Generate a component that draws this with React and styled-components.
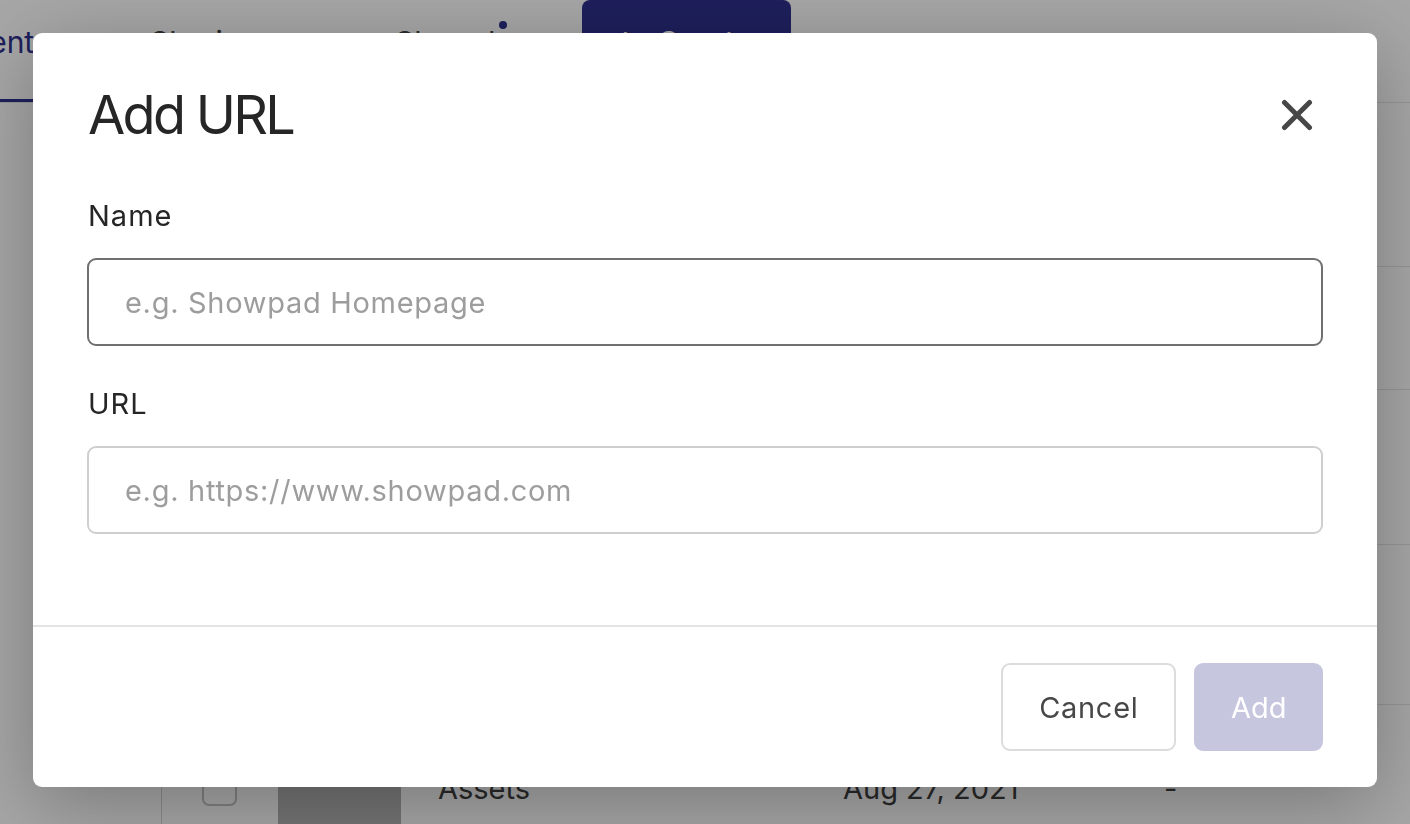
import React from "react";
import styled, { createGlobalStyle } from "styled-components";

const GlobalStyle = createGlobalStyle`
  html, body {
    margin: 0;
    padding: 0;
    overflow: hidden;
    background: #ffffff;
    font-family: Inter, "Noto Sans", "Liberation Sans", sans-serif;
  }
  * {
    box-sizing: border-box;
  }
`;

const NAVY = "#2e308d";

/* ---------- page behind the dialog ---------- */

const Page = styled.div`
  width: 1410px;
  height: 824px;
  overflow: hidden;
  background: #ffffff;
`;

const TopBar = styled.div`
  display: flex;
  align-items: stretch;
  height: 103px;
  border-bottom: 1px solid #e4e4e4;
  margin-left: -78px;
`;

const Tab = styled.div`
  position: relative;
  width: ${({ w }) => w}px;
  flex-shrink: 0;
  padding-top: 27px;
  font-size: 30px;
  line-height: 30px;
  color: ${({ active }) => (active ? NAVY : "#444444")};
  border-bottom: 3px solid ${({ active }) => (active ? NAVY : "transparent")};
`;

const Dot = styled.span`
  position: absolute;
  top: 21px;
  left: 104px;
  width: 8px;
  height: 8px;
  border-radius: 50%;
  background: ${NAVY};
`;

const CreateButton = styled.div`
  display: flex;
  align-items: flex-start;
  justify-content: center;
  width: 209px;
  height: 88px;
  padding-top: 27px;
  border-radius: 8px;
  background: ${NAVY};
  color: #ffffff;
  font-size: 30px;
  line-height: 30px;
`;

const Body = styled.div`
  display: flex;
`;

const Sidebar = styled.div`
  width: 161px;
  flex-shrink: 0;
`;

const Table = styled.div`
  flex: 1;
  border-left: 1px solid #d6d6d6;
`;

const Band = styled.div`
  display: flex;
  align-items: center;
  height: ${({ h }) => h}px;
  border-bottom: 1px solid #e4e4e4;
`;

const CheckCell = styled.div`
  width: 116px;
  padding-left: 40px;
  flex-shrink: 0;
`;

const Checkbox = styled.div`
  width: 35px;
  height: 35px;
  border: 2px solid #c4c4c4;
  border-radius: 7px;
  background: #ffffff;
`;

const Thumb = styled.div`
  width: 123px;
  height: 130px;
  margin-right: 37px;
  background: #b2b2b2;
  flex-shrink: 0;
`;

const Cell = styled.div`
  width: ${({ w }) => w}px;
  flex-shrink: 0;
  font-size: 29px;
  color: #3e3e3e;
`;

/* ---------- dialog ---------- */

const Overlay = styled.div`
  position: fixed;
  inset: 0;
  display: flex;
  justify-content: center;
  align-items: flex-start;
  padding-top: 33px;
  background: rgba(0, 0, 0, 0.35);
`;

const Dialog = styled.div`
  width: 1344px;
  display: flex;
  flex-direction: column;
  background: #ffffff;
  border-radius: 9px;
  box-shadow: 0 18px 80px rgba(0, 0, 0, 0.28);
`;

const Header = styled.div`
  display: flex;
  align-items: center;
  justify-content: space-between;
  padding: 55px 54px 0 55px;
`;

const Title = styled.h2`
  margin: 0;
  font-size: 54px;
  line-height: 54px;
  font-weight: 400;
  color: #262626;
  letter-spacing: -2.7px;
`;

const CloseButton = styled.button`
  display: flex;
  align-items: center;
  justify-content: center;
  width: 52px;
  height: 52px;
  padding: 0;
  border: none;
  background: transparent;
  cursor: pointer;
`;

const Form = styled.div`
  display: flex;
  flex-direction: column;
  padding: 59px 54px 91px 55px;
`;

const Field = styled.div`
  display: flex;
  flex-direction: column;
  & + & {
    margin-top: 43px;
  }
`;

const Label = styled.label`
  font-size: 29px;
  line-height: 29px;
  letter-spacing: 1px;
  color: #262626;
  margin-bottom: 28px;
`;

const Input = styled.input`
  height: 88px;
  margin-left: -1px;
  padding: 0 36px;
  border: 2px solid ${({ focused }) => (focused ? "#707070" : "#cfcfcf")};
  border-radius: 9px;
  font-family: inherit;
  font-size: 29px;
  letter-spacing: 0.7px;
  color: #262626;
  outline: none;
  &::placeholder {
    color: #9d9d9d;
  }
`;

const Footer = styled.div`
  display: flex;
  justify-content: flex-end;
  gap: 18px;
  padding: 36px 54px 36px 55px;
  border-top: 2px solid #e3e3e3;
`;

const Button = styled.button`
  height: 88px;
  padding: 0 ${({ primary }) => (primary ? 34.5 : 36)}px;
  border-radius: 9px;
  font-family: inherit;
  font-size: 29px;
  letter-spacing: ${({ primary }) => (primary ? 0 : 0.7)}px;
  border: 2px solid ${({ primary }) => (primary ? "#c6c6de" : "#dcdcdc")};
  background: ${({ primary }) => (primary ? "#c6c6de" : "#ffffff")};
  color: ${({ primary }) => (primary ? "#ffffff" : "#474747")};
  cursor: pointer;
`;

function CloseIcon() {
  return (
    <svg width="32" height="32" viewBox="0 0 32 32" fill="none">
      <path
        d="M3.5 3.5 28.5 28.5M28.5 3.5 3.5 28.5"
        stroke="#474747"
        strokeWidth="5"
        strokeLinecap="round"
      />
    </svg>
  );
}

function Background() {
  return (
    <Page>
      <TopBar>
        <Tab active w={228}>
          Content
        </Tab>
        <Tab w={245}>Sharing</Tab>
        <Tab w={187}>
          Shared
          <Dot />
        </Tab>
        <CreateButton>to Create</CreateButton>
      </TopBar>
      <Body>
        <Sidebar />
        <Table>
          <Band h={164} />
          <Band h={123} />
          <Band h={155} />
          <Band h={160} />
          <Band h={168}>
            <CheckCell>
              <Checkbox />
            </CheckCell>
            <Thumb />
            <Cell w={405}>Assets</Cell>
            <Cell w={321}>Aug 27, 2021</Cell>
            <Cell w={100}>-</Cell>
          </Band>
        </Table>
      </Body>
    </Page>
  );
}

export default function App() {
  const [name, setName] = React.useState("");
  const [url, setUrl] = React.useState("");

  return (
    <>
      <GlobalStyle />
      <Background />
      <Overlay>
        <Dialog role="dialog" aria-label="Add URL">
          <Header>
            <Title>Add URL</Title>
            <CloseButton aria-label="Close">
              <CloseIcon />
            </CloseButton>
          </Header>
          <Form>
            <Field>
              <Label>Name</Label>
              <Input
                focused
                value={name}
                placeholder="e.g. Showpad Homepage"
                onChange={(e) => setName(e.target.value)}
              />
            </Field>
            <Field>
              <Label>URL</Label>
              <Input
                value={url}
                placeholder="e.g. https://www.showpad.com"
                onChange={(e) => setUrl(e.target.value)}
              />
            </Field>
          </Form>
          <Footer>
            <Button>Cancel</Button>
            <Button primary disabled={!name || !url}>
              Add
            </Button>
          </Footer>
        </Dialog>
      </Overlay>
    </>
  );
}
